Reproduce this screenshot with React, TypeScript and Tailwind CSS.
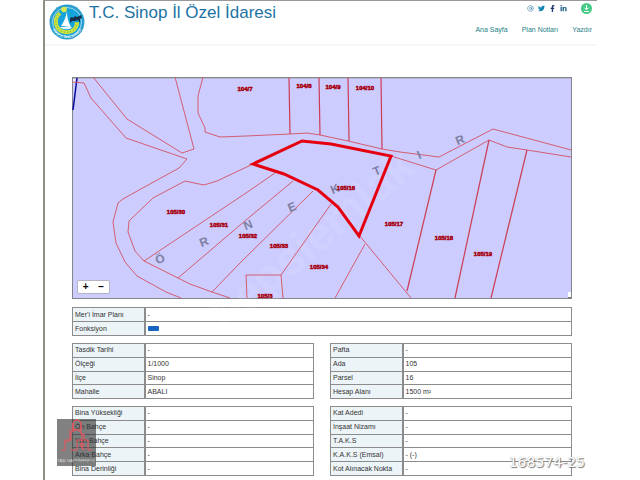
import { AtSign } from "lucide-react"
import { FaFacebookF, FaLinkedinIn, FaTwitter } from "react-icons/fa"

type Row = { label: string; value: string; swatch?: boolean }

const planRows: Row[] = [
    { label: "Mer'i İmar Planı", value: "-" },
    { label: "Fonksiyon", value: "", swatch: true },
]

const locationRows: Row[] = [
    { label: "Tasdik Tarihi", value: "-" },
    { label: "Ölçeği", value: "1/1000" },
    { label: "İlçe", value: "Sinop" },
    { label: "Mahalle", value: "ABALI" },
]

const parcelRows: Row[] = [
    { label: "Pafta", value: "-" },
    { label: "Ada", value: "105" },
    { label: "Parsel", value: "16" },
    { label: "Hesap Alanı", value: "1500 m²" },
]

const setbackRows: Row[] = [
    { label: "Bina Yüksekliği", value: "-" },
    { label: "Ön Bahçe", value: "-" },
    { label: "Yan Bahçe", value: "-" },
    { label: "Arka Bahçe", value: "-" },
    { label: "Bina Derinliği", value: "-" },
]

const densityRows: Row[] = [
    { label: "Kat Adedi", value: "-" },
    { label: "İnşaat Nizamı", value: "-" },
    { label: "T.A.K.S", value: "-" },
    { label: "K.A.K.S (Emsal)", value: "- (-)" },
    { label: "Kot Alınacak Nokta", value: "-" },
]

const thinLines = [
    "93,77 127,119 182,153 194,149 175,77",
    "73,82 84,83 91,98 126,138 187,159 179,168 139,190 123,199 118,203 113,222 116,243 125,262 137,276 166,292 181,298",
    "253,164 217,181 204,185 185,181 168,190 153,198 129,221 128,232 135,251 144,261 178,278 190,284 212,292 230,298",
    "203,77 198,96 198,113 205,128 205,132 220,137 246,136 290,134 307,133 320,135 348,141 382,149 400,152 439,157 493,129 560,147 571,150",
    "391,156 436,170 489,140 507,147 527,150 571,157",
    "144,261 246,193 275,173",
    "178,278 246,220 293,181",
    "212,292 240,263 313,191",
    "331,204 281,275",
    "359,235 411,298",
    "365,244 335,298",
    "247,298 246,275 281,275 283,298",
]

const parcelLines = [
    "289,78 290,134",
    "319,78 320,135",
    "348,78 349,141",
    "381,78 382,149",
    "436,170 407,291",
    "489,140 455,298",
    "527,150 491,298",
]

const parcels = [
    { x: 245, y: 91, name: "104/7" },
    { x: 304, y: 88, name: "104/8" },
    { x: 333, y: 89, name: "104/9" },
    { x: 365, y: 90, name: "104/10" },
    { x: 346, y: 190, name: "105/16" },
    { x: 394, y: 226, name: "105/17" },
    { x: 444, y: 240, name: "105/18" },
    { x: 483, y: 256, name: "105/19" },
    { x: 176, y: 214, name: "105/30" },
    { x: 219, y: 227, name: "105/31" },
    { x: 248, y: 238, name: "105/32" },
    { x: 279, y: 248, name: "105/33" },
    { x: 319, y: 269, name: "105/34" },
    { x: 265, y: 298, name: "105/3" },
]

const stamp = [
    { x: 160, y: 259, c: "Ö" },
    { x: 204, y: 242, c: "R" },
    { x: 248, y: 225, c: "N" },
    { x: 292, y: 207, c: "E" },
    { x: 335, y: 189, c: "K" },
    { x: 377, y: 171, c: "T" },
    { x: 419, y: 155, c: "I" },
    { x: 460, y: 140, c: "R" },
]

function Logo() {
    return (
        <svg viewBox="0 0 36 36" className="size-9 shrink-0">
            <defs>
                <path id="ring" d="M2 18a16 16 0 0 0 32 0" />
            </defs>
            <circle cx="18" cy="18" r="17.5" fill="#2b9fce" />
            <circle cx="18" cy="18" r="14.5" fill="#16a3da" stroke="#d9f0f8" strokeWidth="0.7" />
            <text fontSize="3" fontWeight="bold" fill="#fff" textAnchor="middle">
                <textPath href="#ring" startOffset="50%">SİNOP İL ÖZEL İDARESİ</textPath>
            </text>
            <path d="M11 9C4 15 6 27 16 28c8 1 12-4 12-10" fill="none" stroke="#cfe23c" strokeWidth="4" />
            <path d="M11 9C4 15 6 27 16 28c8 1 12-4 12-10" fill="none" stroke="#4fae5c" strokeWidth="1" strokeDasharray="1 2" />
            <circle cx="15" cy="5.500" r="2.800" fill="#dbe84a" />
            <path d="M18 7c-1 6-3 11-6 15l10 1c-3-5-4-10-4-16z" fill="#fff" />
            <path d="M11 23h12c-1 3-10 3-12 0z" fill="#e9f7fc" />
            <path d="M21 14l2-1 1 1 2-2 2 1 4-2 1 3-2 1 0 4-2-3-3 1-3 0-2 2z" fill="#14304a" />
        </svg>
    )
}

function ParcelMap() {
    return (
        <div className="relative border border-[#85858d] bg-[#ccccff]">
            <svg viewBox="73 78 498 220" className="block w-full overflow-visible" fontFamily="Liberation Sans, sans-serif">
                <rect x="73" y="78" width="498" height="1" fill="#b9b9cf" />
                <path d="M73 79h3l-1 4h-2z" fill="#eeeefa" />
                <path d="M77 78L73 110" stroke="#0a0aa0" strokeWidth="1.5" />

                {/* faint diagonal watermark */}
                <text x="226" y="332" fontSize="46" fontWeight="bold" fill="#fff" opacity="0.1" transform="rotate(-40 226 332)">
                    hepsiemlak
                </text>

                <g fill="none" stroke="#d4505f" strokeWidth="0.9">
                    {thinLines.map((p) => <polyline key={p} points={p} />)}
                </g>
                <g fill="none" stroke="#cc3c55" strokeWidth="1.2">
                    {parcelLines.map((p) => <polyline key={p} points={p} />)}
                </g>

                <g fontSize="12" fontWeight="bold" fill="#7d7fa3" textAnchor="middle">
                    {stamp.map((s) => (
                        <text key={s.x} x={s.x} y={s.y + 4} transform={`rotate(-22 ${s.x} ${s.y})`}>{s.c}</text>
                    ))}
                </g>

                <polygon
                    points="253,164 302,141 331,144 391,156 359,236 338,207 318,190 284,174"
                    fill="none"
                    stroke="#e4000f"
                    strokeWidth="3"
                />
                <g fontSize="6" fontWeight="bold" fill="#a8000f" stroke="#a8000f" strokeWidth="0.5" textAnchor="middle">
                    {parcels.map((p) => <text key={p.name} x={p.x} y={p.y}>{p.name}</text>)}
                </g>
            </svg>

            <div className="absolute bottom-1 left-1 flex h-[14px] w-[33px] rounded-xs border border-[#b4b4c4] bg-white text-[10px] leading-3 font-bold text-black">
                <button type="button" aria-label="Yakınlaştır" className="flex-1">+</button>
                <button type="button" aria-label="Uzaklaştır" className="flex-1">−</button>
            </div>
            <div className="absolute right-0 bottom-0 h-[6px] w-[3px] border-b border-[#777] bg-white" />
        </div>
    )
}

function InfoTable({ rows, className }: { rows: Row[]; className: string }) {
    return (
        <table className={`w-full table-fixed border-collapse border border-[#8c8c8c] ${className}`}>
            <tbody>
                {rows.map((row) => (
                    <tr key={row.label}>
                        <th scope="row" className="w-[72px] border border-r-2 border-[#8c8c8c] bg-[#edf4f8] p-0 pl-[2px] text-left font-normal">
                            {row.label}
                        </th>
                        <td className="border border-[#8c8c8c] p-0 pl-[2px]">
                            {row.swatch ? <span className="block h-[5px] w-[11px] rounded-[1px] bg-[#1565c0]" /> : row.value}
                        </td>
                    </tr>
                ))}
            </tbody>
        </table>
    )
}

function AgencyBadge() {
    return (
        <div className="absolute bottom-[14px] left-[12px] flex h-[47px] w-[39px] flex-col items-center bg-[#2d2d2d]/60">
            <svg viewBox="0 0 39 40" className="h-10 w-full" fill="none" stroke="#e8575e" strokeWidth="1">
                <path d="M4 31h4V21h5V11h3V4l4-4 4 4v11" />
                <path d="M13 14l7-4 5 5M14 14v8M16 4v7M25 15v7M8 24l5-3M24 15h3v6h4v10h4M13 31h7V21h5v9h3" />
                <path d="M16 5a4 4 0 0 1 8 0v6h-8z" />
                <circle cx="25" cy="26" r="2" />
            </svg>
            <span className="text-[4px] leading-1 whitespace-nowrap text-[#ddd]">TAŞI GAYRİMENKUL</span>
        </div>
    )
}

export default function App() {
    return (
        <div className="h-screen overflow-hidden bg-white px-[43px] font-['Liberation_Sans',Arial,sans-serif] text-[7px] leading-[12px] text-[#333]">
            <div className="relative h-full border-t border-l-2 border-t-[#9a9699] border-l-[#918e8a]">
                <header className="flex h-[45px] justify-between border-b-2 border-[#f7f7f7] pr-[5px] pl-1">
                    <div className="flex items-start gap-1">
                        <div className="pt-[3px]">
                            <Logo />
                        </div>
                        <h1 className="pt-[1px] text-[17px] leading-[22px] text-[#1d73a3]">T.C. Sinop İl Özel İdaresi</h1>
                    </div>
                    <div className="flex flex-col items-end pt-[2px]">
                        <div className="flex items-center">
                            <div className="flex items-center gap-[4px] pr-[14px]">
                                <a href="#mail" aria-label="E-posta"><AtSign size={7} color="#3a80a8" /></a>
                                <a href="#twitter" aria-label="Twitter"><FaTwitter size={7} color="#1687b5" /></a>
                                <a href="#facebook" aria-label="Facebook"><FaFacebookF size={7} color="#1f3b6d" /></a>
                                <a href="#linkedin" aria-label="LinkedIn"><FaLinkedinIn size={7} color="#155a80" /></a>
                            </div>
                            <button type="button" aria-label="İndir" className="flex size-[11px] items-center justify-center rounded-full bg-[#45cb85]">
                                <svg viewBox="0 0 11 11" className="size-[11px]" fill="none" stroke="#fff">
                                    <path d="M5.500 2v4.500M3.500 4.800l2 2 2-2M3 8.500h5" />
                                </svg>
                            </button>
                        </div>
                        <nav className="mt-[10px] flex gap-[14px] text-[#1c7f86]">
                            <a href="#home">Ana Sayfa</a>
                            <a href="#notes">Plan Notları</a>
                            <a href="#print">Yazdır</a>
                        </nav>
                    </div>
                </header>

                <main className="flex flex-col gap-[7px] pt-[31px] pr-[25px] pl-[27px]">
                    <ParcelMap />
                    <InfoTable rows={planRows} className="mt-[1px] h-[29px]" />
                    <div className="grid grid-cols-2 gap-x-4 gap-y-[7px]">
                        <InfoTable rows={locationRows} className="h-14" />
                        <InfoTable rows={parcelRows} className="h-14" />
                        <InfoTable rows={setbackRows} className="h-[70px]" />
                        <InfoTable rows={densityRows} className="h-[70px]" />
                    </div>
                </main>

                <AgencyBadge />
                <span className="absolute right-[12px] bottom-[9px] font-['DejaVu_Sans',sans-serif] text-[14px] leading-[18px] text-white [text-shadow:1px_1px_1px_#777,0_0_1px_#999]">
                    168574-25
                </span>
            </div>
        </div>
    )
}
